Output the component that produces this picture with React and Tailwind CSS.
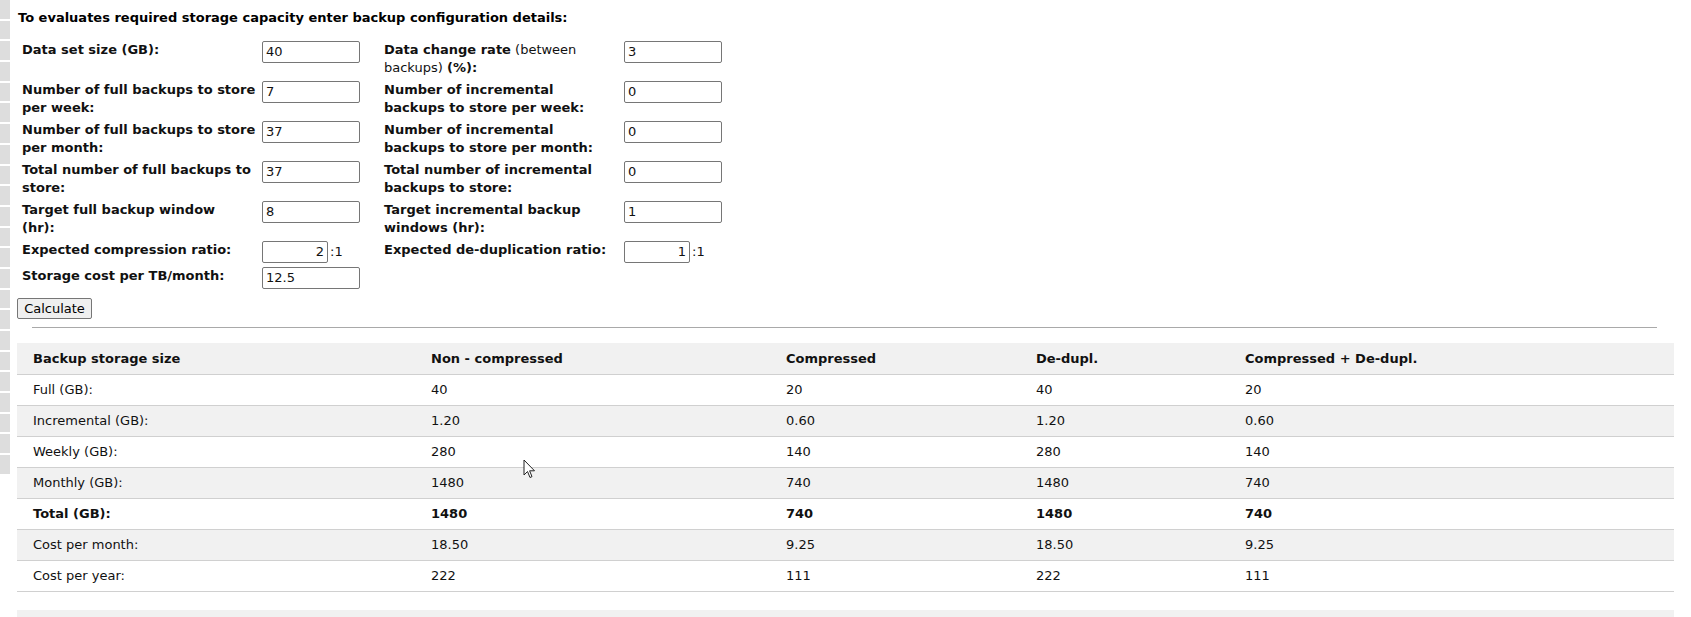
import React from 'react';

const fields = [
  {
    left: { label: ['Data set size (GB):'], value: '40' },
    right: { label: null, value: '3' },
  },
  {
    left: { label: ['Number of full backups to store', 'per week:'], value: '7' },
    right: { label: ['Number of incremental', 'backups to store per week:'], value: '0' },
  },
  {
    left: { label: ['Number of full backups to store', 'per month:'], value: '37' },
    right: { label: ['Number of incremental', 'backups to store per month:'], value: '0' },
  },
  {
    left: { label: ['Total number of full backups to', 'store:'], value: '37' },
    right: { label: ['Total number of incremental', 'backups to store:'], value: '0' },
  },
  {
    left: { label: ['Target full backup window', '(hr):'], value: '8' },
    right: { label: ['Target incremental backup', 'windows (hr):'], value: '1' },
  },
  {
    left: { label: ['Expected compression ratio:'], value: '2', ratio: true },
    right: { label: ['Expected de-duplication ratio:'], value: '1', ratio: true },
  },
  {
    left: { label: ['Storage cost per TB/month:'], value: '12.5' },
    right: null,
  },
];

const rows = [
  { name: 'Full (GB):', vals: ['40', '20', '40', '20'] },
  { name: 'Incremental (GB):', vals: ['1.20', '0.60', '1.20', '0.60'] },
  { name: 'Weekly (GB):', vals: ['280', '140', '280', '140'] },
  { name: 'Monthly (GB):', vals: ['1480', '740', '1480', '740'] },
  { name: 'Total (GB):', vals: ['1480', '740', '1480', '740'], bold: true },
  { name: 'Cost per month:', vals: ['18.50', '9.25', '18.50', '9.25'] },
  { name: 'Cost per year:', vals: ['222', '111', '222', '111'] },
];

const Label = ({ lines }) => (
  <div className="font-bold leading-[18px]">
    {lines.map((l, i) => (
      <div key={i}>{l}</div>
    ))}
  </div>
);

const Input = ({ value, ratio }) =>
  ratio ? (
    <div className="flex items-center">
      <div className="w-[66px] h-[22px] border border-[#767676] rounded-[2px] bg-white px-[3px] text-right leading-[20px]">
        {value}
      </div>
      <span className="ml-[2px]">:1</span>
    </div>
  ) : (
    <div className="w-[98px] h-[22px] border border-[#767676] rounded-[2px] bg-white px-[3px] leading-[20px]">
      {value}
    </div>
  );

const App = () => {
  return (
    <div className="relative flex min-h-[617px] bg-white text-[13px] text-[#111] font-['DejaVu_Sans','Liberation_Sans',sans-serif]">
      {/* left gutter strip */}
      <div className="w-[10px] flex flex-col gap-[2px]">
        {Array.from({ length: 23 }).map((_, i) => (
          <div key={i} className="h-[18.7px] bg-[#dddddd]"></div>
        ))}
      </div>

      <div className="flex-1 ml-[7px] mr-[17px] flex flex-col">
        <p className="mt-[9px] ml-[1px] font-bold leading-[18px] text-black">
          To evaluates required storage capacity enter backup configuration details:
        </p>

        {/* Form */}
        <div className="mt-[12px] ml-[3px]">
          {fields.map((f, i) => (
            <div key={i} className="flex items-start py-[2px]">
              <div className="w-[240px] px-[2px]">
                <Label lines={f.left.label} />
              </div>
              <div className="w-[122px] pl-[2px]">
                <Input value={f.left.value} ratio={f.left.ratio} />
              </div>
              {f.right && (
                <>
                  <div className="w-[240px] px-[2px]">
                    {f.right.label ? (
                      <Label lines={f.right.label} />
                    ) : (
                      <div className="leading-[18px]">
                        <div>
                          <span className="font-bold">Data change rate</span> (between
                        </div>
                        <div>
                          backups) <span className="font-bold">(%):</span>
                        </div>
                      </div>
                    )}
                  </div>
                  <div className="pl-[2px]">
                    <Input value={f.right.value} ratio={f.right.ratio} />
                  </div>
                </>
              )}
            </div>
          ))}
        </div>

        <div className="mt-[7px]">
          <button className="w-[75px] h-[21px] bg-[#efefef] border border-[#767676] rounded-[2px] text-[13px] leading-[19px] text-black">
            Calculate
          </button>
        </div>

        <div className="mt-[8px] ml-[15px] mr-[17px] h-px bg-[#a9a9a9]"></div>

        {/* Results */}
        <table className="mt-[15px] w-full table-fixed border-collapse">
          <colgroup>
            <col className="w-[398px]" />
            <col className="w-[355px]" />
            <col className="w-[250px]" />
            <col className="w-[209px]" />
            <col />
          </colgroup>
          <thead>
            <tr className="h-[31px] bg-[#f1f1f1] border-b border-[#d0d0d0]">
              <th className="text-left font-bold pl-[16px]">Backup storage size</th>
              <th className="text-left font-bold pl-[16px]">Non - compressed</th>
              <th className="text-left font-bold pl-[16px]">Compressed</th>
              <th className="text-left font-bold pl-[16px]">De-dupl.</th>
              <th className="text-left font-bold pl-[16px]">Compressed + De-dupl.</th>
            </tr>
          </thead>
          <tbody>
            {rows.map((r, i) => (
              <tr
                key={r.name}
                className={`h-[31px] border-b border-[#d0d0d0] ${i % 2 === 1 ? 'bg-[#f1f1f1]' : 'bg-white'} ${r.bold ? 'font-bold' : ''}`}
              >
                <td className="pl-[16px]">{r.name}</td>
                {r.vals.map((v, j) => (
                  <td key={j} className="pl-[16px]">{v}</td>
                ))}
              </tr>
            ))}
          </tbody>
        </table>

        <div className="mt-[18px] flex-1 bg-[#f1f1f1]"></div>
      </div>

      {/* mouse pointer captured in screenshot */}
      <svg className="absolute left-[523px] top-[459px]" width="13" height="20" viewBox="0 0 13 20">
        <path d="M1 1 L1 16 L4.5 12.5 L7 18.5 L9 17.6 L6.6 11.8 L11.5 11.8 Z" fill="white" stroke="#222" strokeWidth="1" strokeLinejoin="round" />
      </svg>
    </div>
  );
};

export default App;
